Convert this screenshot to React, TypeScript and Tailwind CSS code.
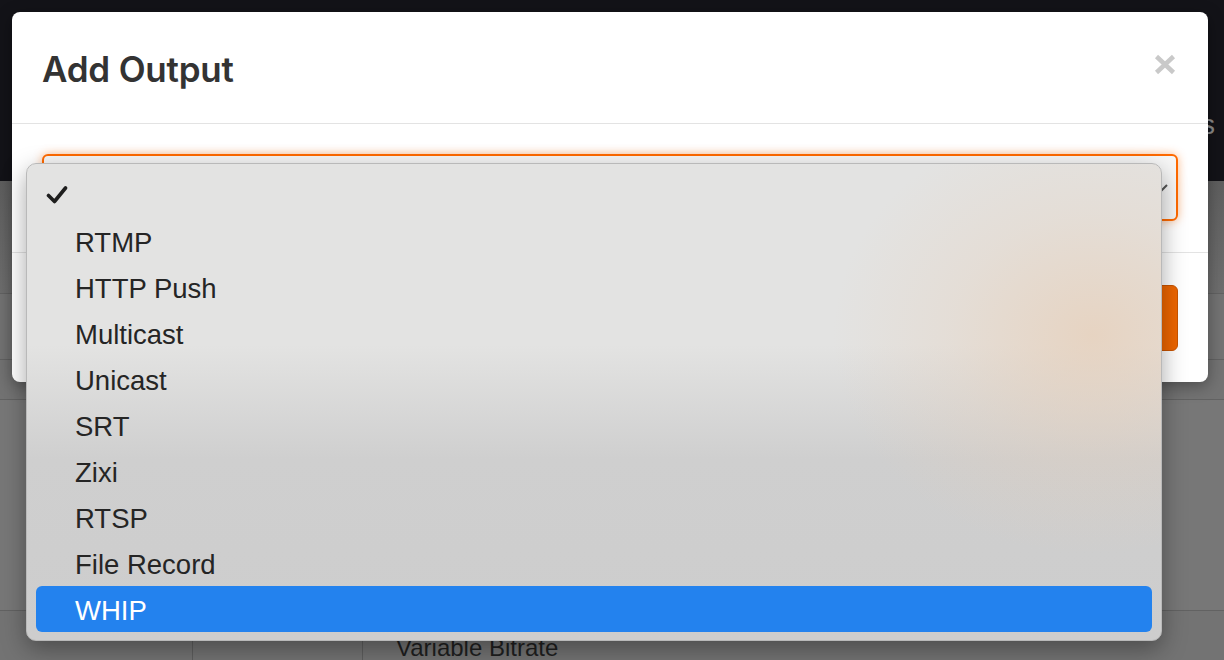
const options = [
  "",
  "RTMP",
  "HTTP Push",
  "Multicast",
  "Unicast",
  "SRT",
  "Zixi",
  "RTSP",
  "File Record",
  "WHIP",
];

function CloseIcon() {
  return (
    <svg width="22" height="21" viewBox="0 0 22 21" className="block">
      <path d="M2.5 2.5L19.5 18.5M19.5 2.5L2.5 18.5" stroke="#c9c9c9" strokeWidth="4.5" />
    </svg>
  );
}

function Check() {
  return (
    <svg width="22" height="20" viewBox="0 0 22 20" className="block">
      <path d="M2.5 10.5L8.5 16.5L19.5 3" fill="none" stroke="#1e1e1e" strokeWidth="3.6" strokeLinecap="round" strokeLinejoin="round" />
    </svg>
  );
}

export default function App() {
  const selected = "WHIP";

  return (
    <div className="relative h-[660px] w-[1224px] overflow-hidden bg-[#737373] font-['Liberation_Sans',Arial,sans-serif]">
      {/* page behind the dimmed overlay */}
      <div className="flex h-[181px] items-start justify-end bg-[#131318]">
        <span className="mr-[9px] mt-[104px] text-[28px] text-[#8a8a8a]">Outputs</span>
      </div>
      <div className="flex h-[479px] flex-col">
        <div className="h-[115px] border-b border-[#626262] bg-gradient-to-b from-[#5f5f5f] to-[#6e6e6e]" />
        <div className="h-[67px] border-b border-[#626262]" />
        <div className="h-[41px] border-b border-[#626262]" />
        <div className="h-[215px] border-b border-[#626262] bg-[#777]" />
        <div className="flex flex-1">
          <div className="w-[193px] border-r border-[#5e5e5e]" />
          <div className="w-[170px] border-r border-[#5e5e5e]" />
          <div className="pl-[33px] pt-[25px] text-[24px] leading-none text-[#1f1f1f]">Variable Bitrate</div>
        </div>
      </div>

      {/* modal */}
      <div className="absolute left-[12px] top-[12px] flex h-[370px] w-[1196px] flex-col rounded-[8px] bg-white shadow-[0_4px_16px_rgba(0,0,0,0.35)]">
        <div className="flex h-[112px] items-start justify-between border-b border-[#e3e3e3] pl-[30px] pr-[32px]">
          <h1 className="mt-[35px] font-['Inter',sans-serif] text-[35px] font-semibold leading-[44px] tracking-[-0.2px] text-[#333]">Add Output</h1>
          <div className="mt-[42px]">
            <CloseIcon />
          </div>
        </div>
        <div className="h-[129px] border-b border-[#e3e3e3] px-[30px] py-[30px]">
          <div className="flex h-[67px] items-center justify-end rounded-[6px] border-2 border-[#ff6a00] bg-[#f7f7f7] pr-[8px] shadow-[0_0_10px_rgba(255,106,0,0.45)]">
            <svg width="14" height="10" viewBox="0 0 14 10">
              <path d="M1 2L7 8L13 2" fill="none" stroke="#555" strokeWidth="2" />
            </svg>
          </div>
        </div>
        <div className="flex flex-1 items-start justify-end px-[30px] pt-[32px]">
          <button className="h-[66px] w-[160px] rounded-[6px] border border-[#c85400] bg-[#ee6600] text-[24px] text-white">
            Add
          </button>
        </div>
      </div>

      {/* native select popup */}
      <div className="absolute left-[26px] top-[163px] h-[478px] w-[1136px] rounded-[10px] border border-[#b9b9b9] bg-[radial-gradient(ellipse_260px_220px_at_94%_36%,rgba(232,205,180,0.7),rgba(232,205,180,0.25)_55%,rgba(232,205,180,0)_100%),linear-gradient(to_bottom,#e3e3e2_38%,#cfcfcf_62%,#cdcdcd)] px-[9px] py-[8px] shadow-[0_8px_24px_rgba(0,0,0,0.35)]">
        {options.map((o) => (
          <div
            key={o || "blank"}
            className={`flex h-[46px] items-center rounded-[6px] pl-[10px] text-[27.5px] leading-none ${
              o === selected ? "bg-[#2382ee] text-white" : "text-[#252525]"
            }`}
          >
            <span className="flex w-[29px] items-center">{o === "" ? <Check /> : null}</span>
            <span className="pt-[3px]">{o}</span>
          </div>
        ))}
      </div>
    </div>
  );
}
